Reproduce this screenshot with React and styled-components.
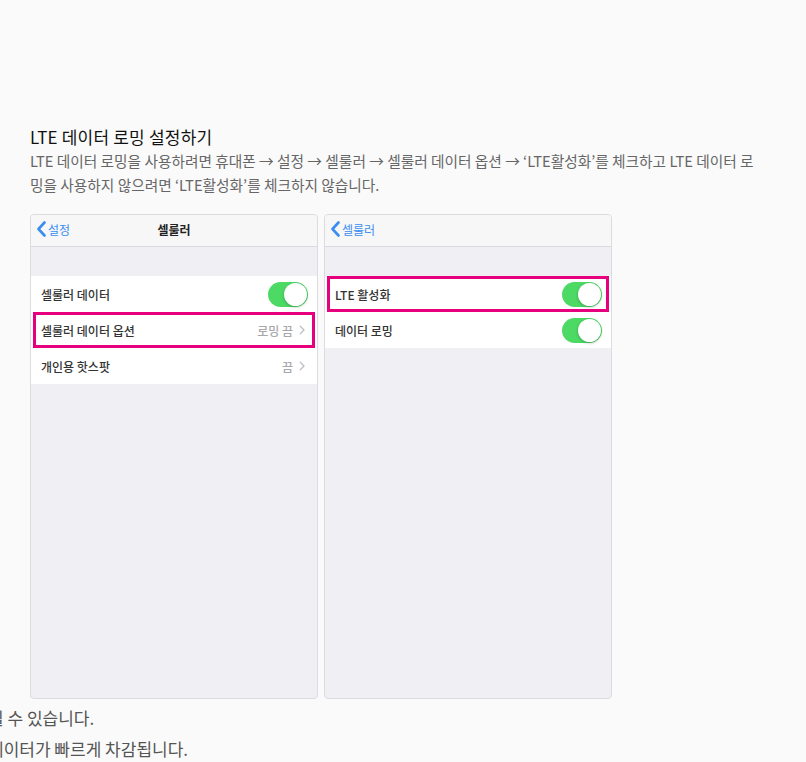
import React from "react";
import styled, { createGlobalStyle } from "styled-components";

const Global = createGlobalStyle`
  html, body { margin: 0; padding: 0; overflow: hidden; background: #fafafa; }
  body { font-family: "Noto Sans CJK KR", "Noto Sans", sans-serif; }
`;

const Page = styled.div`
  width: 806px;
  height: 762px;
  overflow: hidden;
  padding-top: 125px;
  box-sizing: border-box;
`;

const Content = styled.div`
  padding-left: 30px;
  width: 735px;
`;

const Title = styled.h3`
  margin: 0;
  font-size: 17px;
  letter-spacing: 0.2px;
  font-weight: 400;
  line-height: 24px;
  color: #111;
`;

const Desc = styled.p`
  margin: 0;
  font-size: 14.7px;
  line-height: 24px;
  color: #666;
`;

const Shots = styled.div`
  display: flex;
  gap: 6px;
  margin-top: 17px;
`;

const Panel = styled.div`
  width: 288px;
  height: 485px;
  box-sizing: border-box;
  border: 1px solid #dcdce0;
  border-radius: 4px;
  background: #efeff4;
  overflow: hidden;
  display: flex;
  flex-direction: column;
  font-size: 12px;
`;

const NavBar = styled.div`
  height: 32px;
  flex: none;
  box-sizing: border-box;
  background: #f7f7f8;
  border-bottom: 1px solid #dadade;
  display: grid;
  grid-template-columns: 1fr auto 1fr;
  align-items: center;
  padding: 0 5px 3px;
`;

const Back = styled.div`
  display: flex;
  align-items: center;
  gap: 1px;
  color: #3b8ef0;
  font-size: 12px;
`;

const NavTitle = styled.div`
  font-weight: 700;
  color: #222;
  font-size: 12px;
`;

const Group = styled.div`
  margin-top: 29px;
  background: #fff;
  display: flex;
  flex-direction: column;
`;

const Row = styled.div`
  position: relative;
  height: 36px;
  display: flex;
  align-items: center;
  justify-content: space-between;
  padding: 0 9px 0 10px;
  color: #333;
  font-weight: 500;
  ${(p) =>
    p.$hl &&
    `
    &::after {
      content: "";
      position: absolute;
      left: 2px;
      right: 2px;
      top: 0;
      bottom: 0;
      border: 3px solid #e6007e;
    }
  `}
`;

const Detail = styled.div`
  display: flex;
  align-items: center;
  gap: 6px;
  color: #a8a8ac;
  padding-right: 3px;
`;

const Toggle = styled.div`
  width: 40px;
  height: 25px;
  border-radius: 13px;
  background: #4cd964;
  position: relative;
  &::after {
    content: "";
    position: absolute;
    right: 1px;
    top: 1px;
    width: 23px;
    height: 23px;
    border-radius: 50%;
    background: #fff;
    box-shadow: 0 1px 3px rgba(0, 0, 0, 0.25);
  }
`;

const After = styled.div`
  margin-top: 3px;
  margin-left: -12px;
  font-size: 17px;
  line-height: 31px;
  color: #555;
`;

const Chevron = () => (
  <svg width="11" height="16" viewBox="0 0 11 16">
    <polyline points="8.5,1.5 2.5,8 8.5,14.5" fill="none" stroke="#3b8ef0" strokeWidth="2.6" strokeLinecap="round" strokeLinejoin="round" />
  </svg>
);

const SmallChev = () => (
  <svg width="6" height="10" viewBox="0 0 6 10">
    <polyline points="1,1 5,5 1,9" fill="none" stroke="#bdbdc2" strokeWidth="1.3" />
  </svg>
);

export default function App() {
  return (
    <Page>
      <Global />
      <Content>
        <Title>LTE 데이터 로밍 설정하기</Title>
        <Desc>
          LTE 데이터 로밍을 사용하려면 휴대폰 → 설정 → 셀룰러 → 셀룰러 데이터 옵션 → ‘LTE활성화’를 체크하고 LTE 데이터 로밍을 사용하지 않으려면 ‘LTE활성화’를 체크하지 않습니다.
        </Desc>
        <Shots>
          <Panel>
            <NavBar>
              <Back><Chevron />설정</Back>
              <NavTitle>셀룰러</NavTitle>
              <div />
            </NavBar>
            <Group>
              <Row>셀룰러 데이터<Toggle /></Row>
              <Row $hl>셀룰러 데이터 옵션<Detail>로밍 끔<SmallChev /></Detail></Row>
              <Row>개인용 핫스팟<Detail>끔<SmallChev /></Detail></Row>
            </Group>
          </Panel>
          <Panel>
            <NavBar>
              <Back><Chevron />셀룰러</Back>
              <div />
              <div />
            </NavBar>
            <Group>
              <Row $hl>LTE 활성화<Toggle /></Row>
              <Row>데이터 로밍<Toggle /></Row>
            </Group>
          </Panel>
        </Shots>
      </Content>
      <After>
        <div>될 수 있습니다.</div>
        <div>데이터가 빠르게 차감됩니다.</div>
      </After>
    </Page>
  );
}
